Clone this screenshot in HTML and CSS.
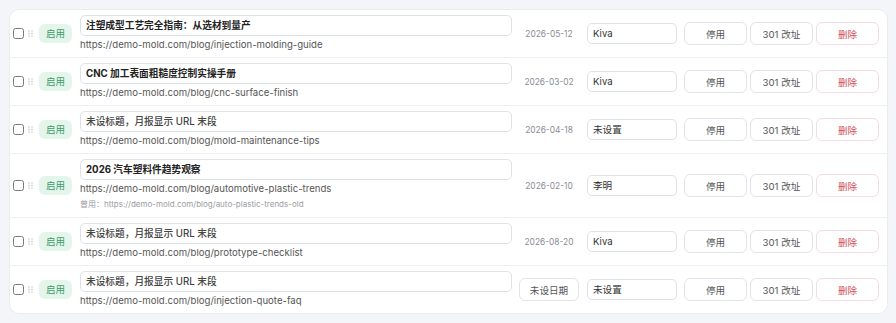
FILE: index.html
```html
<!DOCTYPE html>
<html lang="zh-CN">

<head>
    <meta charset="UTF-8">
    <meta name="viewport" content="width=device-width, initial-scale=1.0">
    <title>文章列表</title>
    <link rel="stylesheet" href="styles.css">
</head>

<body>

    <div class="card">
        <div class="row">
            <input type="checkbox" class="check">
            <svg class="handle" width="5" height="7" viewBox="0 0 5 7"><circle cx="1" cy="1" r="0.8"/><circle cx="4" cy="1" r="0.8"/><circle cx="1" cy="3.5" r="0.8"/><circle cx="4" cy="3.5" r="0.8"/><circle cx="1" cy="6" r="0.8"/><circle cx="4" cy="6" r="0.8"/></svg>
            <span class="badge">启用</span>
            <div class="main">
                <div class="title-box">注塑成型工艺完全指南：从选材到量产</div>
                <div class="url">https://demo-mold.com/blog/injection-molding-guide</div>
            </div>
            <div class="date">2026-05-12</div>
            <div class="owner">Kiva</div>
            <div class="actions">
                <button class="btn">停用</button>
                <button class="btn">301 改址</button>
                <button class="btn btn-danger">删除</button>
            </div>
        </div>

        <div class="row">
            <input type="checkbox" class="check">
            <svg class="handle" width="5" height="7" viewBox="0 0 5 7"><circle cx="1" cy="1" r="0.8"/><circle cx="4" cy="1" r="0.8"/><circle cx="1" cy="3.5" r="0.8"/><circle cx="4" cy="3.5" r="0.8"/><circle cx="1" cy="6" r="0.8"/><circle cx="4" cy="6" r="0.8"/></svg>
            <span class="badge">启用</span>
            <div class="main">
                <div class="title-box">CNC 加工表面粗糙度控制实操手册</div>
                <div class="url">https://demo-mold.com/blog/cnc-surface-finish</div>
            </div>
            <div class="date">2026-03-02</div>
            <div class="owner">Kiva</div>
            <div class="actions">
                <button class="btn">停用</button>
                <button class="btn">301 改址</button>
                <button class="btn btn-danger">删除</button>
            </div>
        </div>

        <div class="row">
            <input type="checkbox" class="check">
            <svg class="handle" width="5" height="7" viewBox="0 0 5 7"><circle cx="1" cy="1" r="0.8"/><circle cx="4" cy="1" r="0.8"/><circle cx="1" cy="3.5" r="0.8"/><circle cx="4" cy="3.5" r="0.8"/><circle cx="1" cy="6" r="0.8"/><circle cx="4" cy="6" r="0.8"/></svg>
            <span class="badge">启用</span>
            <div class="main">
                <div class="title-box placeholder">未设标题，月报显示 URL 末段</div>
                <div class="url">https://demo-mold.com/blog/mold-maintenance-tips</div>
            </div>
            <div class="date">2026-04-18</div>
            <div class="owner">未设置</div>
            <div class="actions">
                <button class="btn">停用</button>
                <button class="btn">301 改址</button>
                <button class="btn btn-danger">删除</button>
            </div>
        </div>

        <div class="row">
            <input type="checkbox" class="check">
            <svg class="handle" width="5" height="7" viewBox="0 0 5 7"><circle cx="1" cy="1" r="0.8"/><circle cx="4" cy="1" r="0.8"/><circle cx="1" cy="3.5" r="0.8"/><circle cx="4" cy="3.5" r="0.8"/><circle cx="1" cy="6" r="0.8"/><circle cx="4" cy="6" r="0.8"/></svg>
            <span class="badge">启用</span>
            <div class="main">
                <div class="title-box">2026 汽车塑料件趋势观察</div>
                <div class="url">https://demo-mold.com/blog/automotive-plastic-trends</div>
                <div class="old-url">曾用：https://demo-mold.com/blog/auto-plastic-trends-old</div>
            </div>
            <div class="date">2026-02-10</div>
            <div class="owner">李明</div>
            <div class="actions">
                <button class="btn">停用</button>
                <button class="btn">301 改址</button>
                <button class="btn btn-danger">删除</button>
            </div>
        </div>

        <div class="row">
            <input type="checkbox" class="check">
            <svg class="handle" width="5" height="7" viewBox="0 0 5 7"><circle cx="1" cy="1" r="0.8"/><circle cx="4" cy="1" r="0.8"/><circle cx="1" cy="3.5" r="0.8"/><circle cx="4" cy="3.5" r="0.8"/><circle cx="1" cy="6" r="0.8"/><circle cx="4" cy="6" r="0.8"/></svg>
            <span class="badge">启用</span>
            <div class="main">
                <div class="title-box placeholder">未设标题，月报显示 URL 末段</div>
                <div class="url">https://demo-mold.com/blog/prototype-checklist</div>
            </div>
            <div class="date">2026-08-20</div>
            <div class="owner">Kiva</div>
            <div class="actions">
                <button class="btn">停用</button>
                <button class="btn">301 改址</button>
                <button class="btn btn-danger">删除</button>
            </div>
        </div>

        <div class="row">
            <input type="checkbox" class="check">
            <svg class="handle" width="5" height="7" viewBox="0 0 5 7"><circle cx="1" cy="1" r="0.8"/><circle cx="4" cy="1" r="0.8"/><circle cx="1" cy="3.5" r="0.8"/><circle cx="4" cy="3.5" r="0.8"/><circle cx="1" cy="6" r="0.8"/><circle cx="4" cy="6" r="0.8"/></svg>
            <span class="badge">启用</span>
            <div class="main">
                <div class="title-box placeholder">未设标题，月报显示 URL 末段</div>
                <div class="url">https://demo-mold.com/blog/injection-quote-faq</div>
            </div>
            <div class="date"><button class="btn date-btn">未设日期</button></div>
            <div class="owner">未设置</div>
            <div class="actions">
                <button class="btn">停用</button>
                <button class="btn">301 改址</button>
                <button class="btn btn-danger">删除</button>
            </div>
        </div>
    </div>

</body>

</html>
```

FILE: styles.css
```css
body {
    font-family: 'Inter', 'Noto Sans CJK SC', sans-serif;
    margin: 0;
    padding: 9px 8px 0 9px;
    background-color: #f4f5f9;
    color: #333;
}

.card {
    background-color: #fff;
    border: 1px solid #eaecf1;
    border-radius: 10px;
    width: 877px;
}

.row {
    display: flex;
    align-items: center;
    padding: 0 8px 0 3px;
    border-bottom: 1px solid #eff0f4;
}

.row:last-child {
    border-bottom: none;
}

.check {
    appearance: none;
    -webkit-appearance: none;
    width: 11px;
    height: 11px;
    margin: 0;
    border: 1.3px solid #7a7a7a;
    border-radius: 2.5px;
    background-color: #fff;
}

.handle {
    margin-left: 4px;
    fill: #c4c6cc;
}

.badge {
    margin-left: 6px;
    width: 33px;
    height: 19px;
    line-height: 19px;
    text-align: center;
    border-radius: 6px;
    background-color: #e4f5ec;
    color: #3c9a6a;
    font-size: 9.5px;
}

.main {
    margin-left: 8px;
    width: 432px;
    padding: 5px 0 5px;
}

.title-box {
    height: 21px;
    line-height: 19px;
    box-sizing: border-box;
    border: 1px solid #dfe1e8;
    border-radius: 5px;
    padding: 0 5px;
    font-size: 9.7px;
    font-weight: 700;
    color: #222;
}

.title-box.placeholder {
    font-weight: 500;
    color: #444;
}

.url {
    font-size: 9.6px;
    line-height: 15px;
    color: #555;
    margin-top: 1px;
}

.old-url {
    font-size: 8px;
    line-height: 16px;
    color: #9a9ca3;
}

.date {
    margin-left: 7px;
    width: 60px;
    text-align: center;
    font-size: 8.4px;
    color: #8a8c95;
}

.owner {
    margin-left: 8px;
    width: 90px;
    height: 21px;
    line-height: 19px;
    box-sizing: border-box;
    border: 1px solid #dfe1e8;
    border-radius: 5px;
    padding: 0 5px;
    font-size: 9.6px;
    color: #333;
}

.actions {
    margin-left: 7px;
    display: flex;
    gap: 3px;
}

.btn {
    width: 63px;
    height: 23px;
    padding: 0;
    box-sizing: border-box;
    border: 1px solid #e3e4ea;
    border-radius: 6px;
    background-color: #fff;
    font-family: 'Inter', 'Noto Sans CJK SC', sans-serif;
    font-size: 9.6px;
    color: #555;
}

.btn-danger {
    border-color: #f3dcdf;
    color: #d0505a;
}

.date-btn {
    width: 60px;
}
```
